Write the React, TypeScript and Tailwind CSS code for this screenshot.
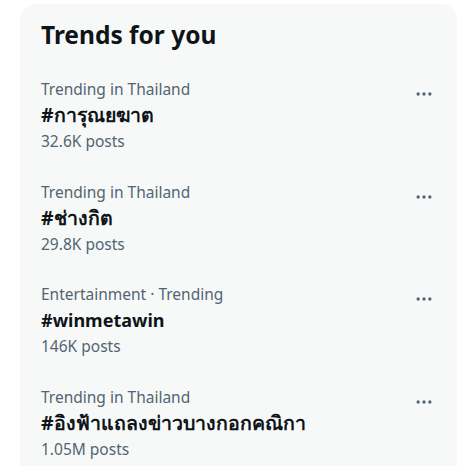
import React from "react";

const trends = [
  { cat: "Trending in Thailand", title: "#การุณยฆาต", posts: "32.6K posts", thai: true },
  { cat: "Trending in Thailand", title: "#ช่างกิต", posts: "29.8K posts", thai: true },
  { cat: "Entertainment · Trending", title: "#winmetawin", posts: "146K posts", thai: false },
  { cat: "Trending in Thailand", title: "#อิงฟ้าแถลงข่าวบางกอกคณิกา", posts: "1.05M posts", thai: true },
];

function Dots() {
  return (
    <svg width="20" height="20" viewBox="0 0 24 24" fill="#536471">
      <circle cx="5" cy="12" r="2" />
      <circle cx="12" cy="12" r="2" />
      <circle cx="19" cy="12" r="2" />
    </svg>
  );
}

export default function App() {
  return (
    <div
      className="w-[470px] h-[466px] overflow-hidden bg-white pt-[4px] pl-[20px] pr-[13px]"
      style={{ fontFamily: '"Noto Sans", "Open Sans", sans-serif' }}
    >
      <div className="bg-[#f7f9f9] rounded-[16px] h-[500px]">
        <div className="pl-[21px] pt-[15px] pb-[13px]">
          <h2 className="text-[24.5px] leading-[32px] font-bold text-[#0f1419]">Trends for you</h2>
        </div>
        <div className="flex flex-col">
          {trends.map((t, i) => (
            <div key={i} className="flex pl-[21px] pr-[23px] pt-[12px] pb-[12.5px]">
              <div className="flex-1 flex flex-col">
                <div className="text-[15.5px] leading-[26px] text-[#536471]">{t.cat}</div>
                <div
                  className={
                    t.thai
                      ? "text-[19.5px] leading-[26px] font-bold text-[#0f1419]"
                      : "text-[18px] leading-[26px] font-bold text-[#0f1419]"
                  }
                >
                  {t.title}
                </div>
                <div className="text-[15.5px] leading-[26px] text-[#536471]">{t.posts}</div>
              </div>
              <div className="pt-[8px]">
                <Dots />
              </div>
            </div>
          ))}
        </div>
      </div>
    </div>
  );
}
